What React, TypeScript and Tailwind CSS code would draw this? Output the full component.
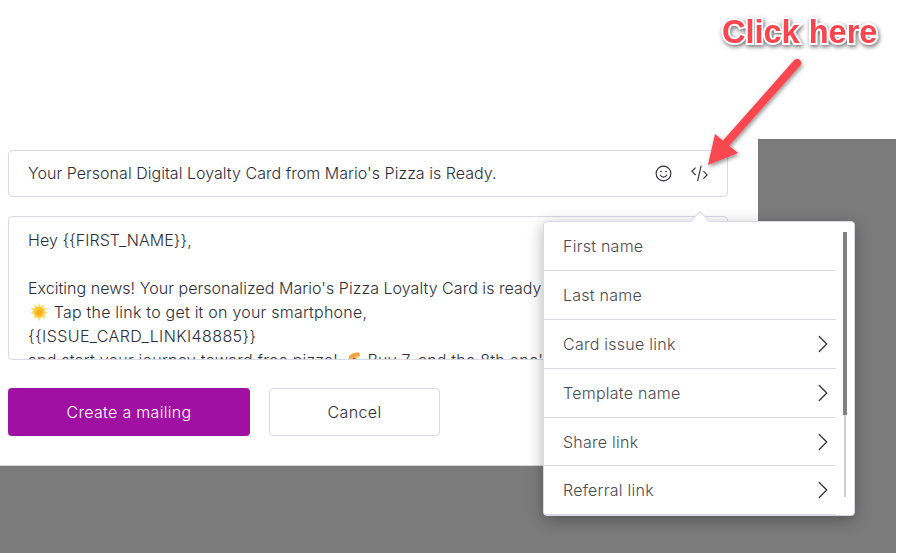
import { ChevronRight } from "lucide-react";

const menuItems = [
  { label: "First name", sub: false },
  { label: "Last name", sub: false },
  { label: "Card issue link", sub: true },
  { label: "Template name", sub: true },
  { label: "Share link", sub: true },
  { label: "Referral link", sub: true },
];

function SmileIcon() {
  return (
    <svg width="17" height="17" viewBox="0 0 17 17" fill="none" stroke="#2b2b33" strokeWidth="1.1">
      <circle cx="8.5" cy="8.5" r="7.4" />
      <circle cx="6" cy="6.6" r="0.8" fill="#2b2b33" stroke="none" />
      <circle cx="11" cy="6.6" r="0.8" fill="#2b2b33" stroke="none" />
      <path d="M5.2 10.2c.8 1.3 2 1.900 3.300 1.900s2.500-.6 3.300-1.900" strokeLinecap="round" />
    </svg>
  );
}

function CodeIcon() {
  return (
    <svg width="17" height="17" viewBox="0 0 17 17" fill="none" stroke="#2b2b33" strokeWidth="1.1">
      <path d="M4.600 2.600 .9 6.300l3.700 3.700" />
      <path d="M12.400 6.200l3.700 3.700-3.700 3.700" />
      <path d="M10.200 .6 6.600 16.200" />
    </svg>
  );
}

function SunEmoji() {
  return (
    <svg width="18" height="18" viewBox="0 0 18 18" className="ml-[2px] mr-[1px] inline-block align-[-3px]">
      <path
        d="M9 0l1.700 3.800L13.500 1l.3 3.900 3.900.2-2.600 3 2.900 1.900-3.400 1.400 1.100 3.800-3.800-.9L9 18l-1.700-3.600-3.800.9 1.100-3.800L.2 10l2.900-1.900-2.600-3 3.900-.2L4.500 1l2.800 2.800z"
        fill="#fcdc7c"
      />
      <circle cx="9" cy="9" r="5.200" fill="#fbc531" />
      <circle cx="9" cy="9.500" r="2.800" fill="#f7ab1e" />
    </svg>
  );
}

function PizzaEmoji() {
  return (
    <svg width="18" height="18" viewBox="0 0 18 18" className="mx-[1px] inline-block align-[-3px]">
      <path d="M2 16 5 6c3-3 7-4.500 10-4l1 3z" fill="#f8c266" />
      <path d="M5 5c3-3 7-4 10-3.500l1.200 3C12 4.500 8 6 5 8.500z" fill="#f0a33c" />
      <circle cx="10" cy="8" r="1.500" fill="#dd3b2e" />
      <circle cx="6.500" cy="11.500" r="1.200" fill="#dd3b2e" />
    </svg>
  );
}

export default function App() {
  return (
    <div className="relative h-[553px] w-[913px] overflow-hidden bg-white font-['Inter',sans-serif] text-[16px] font-light text-[#2b2e3a]">
      <div className="flex h-full w-[896px] flex-col bg-[#7b7b7b]">
        <div className="h-[139px] shrink-0 bg-white" />
        <div className="h-[326px] w-[758px] bg-white px-2 pt-[11px] shadow-[0_1px_0_#d8d8d8]">
          {/* Subject */}
          <div className="flex h-[47px] w-[720px] items-center rounded border border-[#d9d9e3] pl-[19px] pr-[19px]">
            <span className="flex-1 pb-[2px] tracking-[0.03px]">
              Your Personal Digital Loyalty Card from Mario's Pizza is Ready.
            </span>
            <div className="flex items-center gap-[19px]">
              <SmileIcon />
              <CodeIcon />
            </div>
          </div>

          {/* Message body */}
          <div className="mt-[19px] h-[144px] w-[720px] overflow-hidden rounded border border-[#d9d9e3] pl-[19px] pr-5 pt-[11px] leading-[24px] tracking-[0.04px]">
            <p>Hey {"{{FIRST_NAME}}"},</p>
            <p>&nbsp;</p>
            <p>Exciting news! Your personalized Mario's Pizza Loyalty Card is ready</p>
            <p className="tracking-[0.22px]"><SunEmoji /> Tap the link to get it on your smartphone,</p>
            <p className="tracking-[0.4px]">{"{{ISSUE_CARD_LINKI48885}}"}</p>
            <p className="tracking-[0.22px]">and start your journey toward free pizza! <PizzaEmoji /> Buy 7, and the 8th one's</p>
          </div>

          {/* Actions */}
          <div className="mt-7 flex gap-[19px]">
            <button className="h-12 w-[242px] rounded bg-[#a010a2] tracking-[0.3px] text-white">
              Create a mailing
            </button>
            <button className="h-12 w-[171px] rounded border border-[#d9d9e3] bg-white tracking-[0.4px]">
              Cancel
            </button>
          </div>
        </div>
      </div>

      {/* Variables dropdown */}
      <div className="absolute left-[543px] top-[221px] w-[312px] rounded border border-[#d9d9e3] bg-white shadow-[0_4px_16px_rgba(0,0,0,0.3)]">
        <div className="absolute -top-[8px] left-[149px] h-[14px] w-[14px] rotate-45 border-l border-t border-[#d9d9e3] bg-white" />
        <div className="relative flex">
          <ul className="w-[292px] text-[#4a4a52]">
            {menuItems.map((item) => (
              <li key={item.label} className="flex h-[48.9px] items-center justify-between border-b border-[#d9d9e3] pl-[19px] tracking-[0.25px]">
                {item.label}
                {item.sub && <ChevronRight size={30} strokeWidth={1} className="-mr-[2px] text-[#333]" />}
              </li>
            ))}
          </ul>
          <div className="ml-[7px] mt-[10px] h-[265px] w-1">
            <div className="h-[183px] w-1 bg-[#808086]" />
            <div className="ml-[1px] h-[82px] w-[2px] bg-[#cfcfd4]" />
          </div>
        </div>
      </div>

      {/* Annotation */}
      <div className="absolute left-[722px] top-[13px] text-[32.5px] font-bold leading-[38px] text-[#fb4650] [-webkit-text-stroke:4px_#fff] [filter:drop-shadow(1px_2px_2px_rgba(0,0,0,0.55))] [font-family:'Liberation_Sans',sans-serif] [paint-order:stroke_fill]">
        Click here
      </div>
      <svg className="absolute left-[700px] top-[50px]" width="110" height="120" viewBox="0 0 110 120" fill="none">
        <defs>
          <filter id="arrowShadow" x="-20%" y="-20%" width="150%" height="150%">
            <feDropShadow dx="1" dy="2" stdDeviation="2" floodColor="#000" floodOpacity="0.45" />
          </filter>
        </defs>
        <g filter="url(#arrowShadow)">
          <path d="M97 13 27 92" stroke="#fb4650" strokeWidth="8" strokeLinecap="round" />
          <path d="M8 115 15 84 38 103z" fill="#fb4650" />
        </g>
      </svg>
    </div>
  );
}
